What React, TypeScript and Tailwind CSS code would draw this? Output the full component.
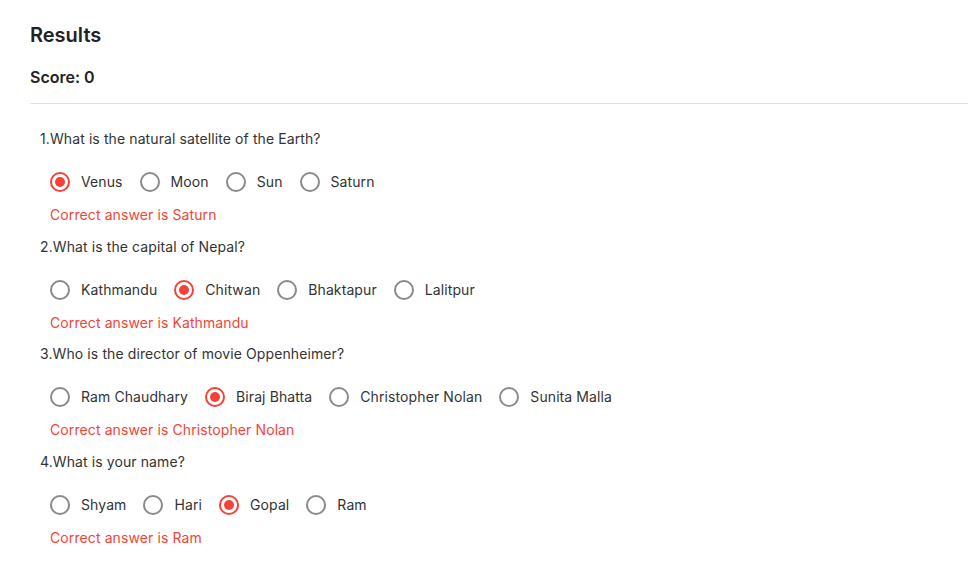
import React from "react";

type Q = { q: string; options: string[]; selected: number; correct: string };

const questions: Q[] = [
  { q: "1.What is the natural satellite of the Earth?", options: ["Venus", "Moon", "Sun", "Saturn"], selected: 0, correct: "Saturn" },
  { q: "2.What is the capital of Nepal?", options: ["Kathmandu", "Chitwan", "Bhaktapur", "Lalitpur"], selected: 1, correct: "Kathmandu" },
  { q: "3.Who is the director of movie Oppenheimer?", options: ["Ram Chaudhary", "Biraj Bhatta", "Christopher Nolan", "Sunita Malla"], selected: 1, correct: "Christopher Nolan" },
  { q: "4.What is your name?", options: ["Shyam", "Hari", "Gopal", "Ram"], selected: 2, correct: "Ram" },
];

function Radio({ checked }: { checked: boolean }) {
  return (
    <span
      className={
        checked
          ? "flex h-[20px] w-[20px] shrink-0 items-center justify-center rounded-full border-2 border-[#f44336]"
          : "flex h-[20px] w-[20px] shrink-0 items-center justify-center rounded-full border-2 border-[#8a8a8a]"
      }
    >
      {checked && <span className="h-[10px] w-[10px] rounded-full bg-[#f44336]" />}
    </span>
  );
}

export default function App() {
  return (
    <div className="min-h-[563px] bg-white pl-[30px] pr-px text-[#333] [font-family:Inter,'Noto_Sans',sans-serif]">
      <div className="pt-[21px] text-[20px] leading-[28px] font-semibold text-[#222]">Results</div>
      <div className="mt-[16px] text-[16px] leading-[24px] font-semibold text-[#222]">Score: 0</div>
      <div className="mt-[14px] h-px bg-[#e0e0e0]" />
      <div className="pl-[10px] pt-[25px] tracking-[0.1px]">
        {questions.map((item, qi) => (
          <div key={qi} className="mb-[11.7px]">
            <div className="text-[14px] leading-[20px] text-[#333]">{item.q}</div>
            <div className="mt-[12px] flex h-[42px] items-center pl-[10px]">
              {item.options.map((o, oi) => (
                <label key={oi} className="mr-[17px] flex items-center gap-[11px] text-[14px] leading-[20px] text-[#333]">
                  <Radio checked={oi === item.selected} />
                  <span>{o}</span>
                </label>
              ))}
            </div>
            <div className="mt-[2px] pl-[10px] text-[14px] leading-[20px] text-[#f44336]">
              Correct answer is {item.correct}
            </div>
          </div>
        ))}
      </div>
    </div>
  );
}
